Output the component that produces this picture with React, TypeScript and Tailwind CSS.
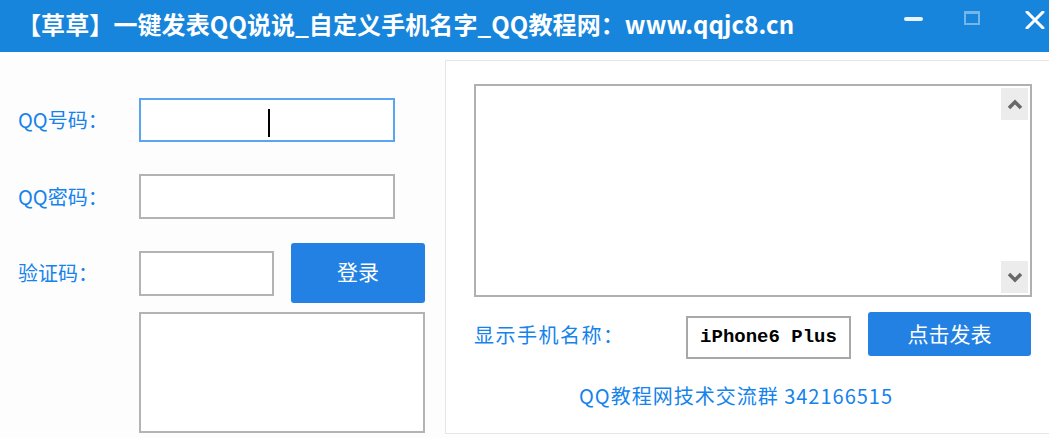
const BLUE = "text-[#1583ec]";

function TitleBar() {
  return (
    <div className="flex h-[52px] items-center bg-[#1885dc] pl-[17px] text-white">
      <div className="flex-1 pb-[4px] text-[24px] font-bold tracking-[0.1px]">
        【草草】一键发表QQ说说_自定义手机名字_QQ教程网：www.qqjc8.cn
      </div>
      <div className="flex h-full items-start">
        <div className="flex h-full w-[60px] items-start justify-center pt-[17px]">
          <div className="h-[4px] w-[19px] rounded-full bg-white/90" />
        </div>
        <div className="flex h-full w-[58px] items-start justify-center pt-[11px]">
          <div className="h-[14px] w-[16px] border-2 border-t-[3px] border-white/40" />
        </div>
        <div className="flex h-full w-[48px] items-start justify-end pt-[11px]">
          <svg width="26" height="18" viewBox="0 0 26 18">
            <path d="M4 1 L20 17 M20 1 L4 17" stroke="white" strokeWidth="3" strokeLinecap="round" />
          </svg>
        </div>
      </div>
    </div>
  );
}

function Label({ children }: { children: React.ReactNode }) {
  return <span className={`w-[121px] text-[20px] leading-none ${BLUE}`}>{children}</span>;
}

function LeftPanel() {
  return (
    <div className="flex w-[445px] shrink-0 flex-col pl-[18px] pt-[46px]">
      <div className="flex h-[44px] items-center">
        <Label>QQ号码：</Label>
        <div className="relative h-[44px] w-[256px] border-2 border-[#5aa5f2] bg-white">
          <div className="absolute left-[127px] top-[9px] h-[28px] w-[2px] bg-black" />
        </div>
      </div>
      <div className="mt-[32px] flex h-[45px] items-center">
        <Label>QQ密码：</Label>
        <div className="h-[45px] w-[256px] border-2 border-[#b3b3b3] bg-white" />
      </div>
      <div className="mt-[24px] flex h-[60px] items-center">
        <Label>验证码：</Label>
        <div className="h-[45px] w-[135px] border-2 border-[#b3b3b3] bg-white" />
        <button className="ml-[17px] flex h-[60px] w-[134px] items-center justify-center rounded-[3px] bg-[#2281e2] pb-[2px] text-[21px] text-white">
          登录
        </button>
      </div>
      <div className="ml-[121px] mt-[9px] h-[121px] w-[286px] border-2 border-[#b3b3b3] bg-white" />
    </div>
  );
}

function ScrollBtn({ up }: { up?: boolean }) {
  return (
    <div className="flex h-[32px] w-[27px] items-center justify-center bg-[#ececec]">
      <svg width="16" height="11" viewBox="0 0 16 11">
        <path
          d={up ? "M2 9 L8 3 L14 9" : "M2 2 L8 8 L14 2"}
          stroke="#686868"
          strokeWidth="3.5"
          fill="none"
        />
      </svg>
    </div>
  );
}

function RightPanel() {
  return (
    <div className="mt-[8px] flex h-[374px] flex-1 flex-col border-y border-l border-[#e6e6e6] bg-white pl-[28px] pt-[23px]">
      <div className="flex h-[213px] w-[558px] justify-end border-2 border-[#b0b0b0] p-[2px]">
        <div className="flex flex-col justify-between">
          <ScrollBtn up />
          <ScrollBtn />
        </div>
      </div>
      <div className="mt-[15px] flex h-[46px] items-center">
        <span className={`w-[212px] text-[20px] leading-none tracking-[1.5px] ${BLUE}`}>显示手机名称：</span>
        <div className="mt-[4px] flex h-[43px] w-[165px] items-center justify-center border-2 border-[#a8a8a8] bg-white font-['Liberation_Mono',monospace] text-[19px] font-bold text-black">
          iPhone6 Plus
        </div>
        <button className="ml-[17px] mt-[-2px] flex h-[44px] w-[163px] items-center justify-center rounded-[3px] bg-[#2281e2] text-[21px] text-white">
          点击发表
        </button>
      </div>
      <div className={`mt-[28px] pl-[105px] text-[20px] leading-none tracking-[1px] ${BLUE}`}>
        QQ教程网技术交流群 342166515
      </div>
    </div>
  );
}

export default function App() {
  return (
    <div className="flex h-[438px] w-[1049px] flex-col overflow-hidden bg-[#fdfdfd] font-['Noto_Sans_CJK_SC',sans-serif]">
      <TitleBar />
      <div className="flex flex-1">
        <LeftPanel />
        <RightPanel />
      </div>
    </div>
  );
}
